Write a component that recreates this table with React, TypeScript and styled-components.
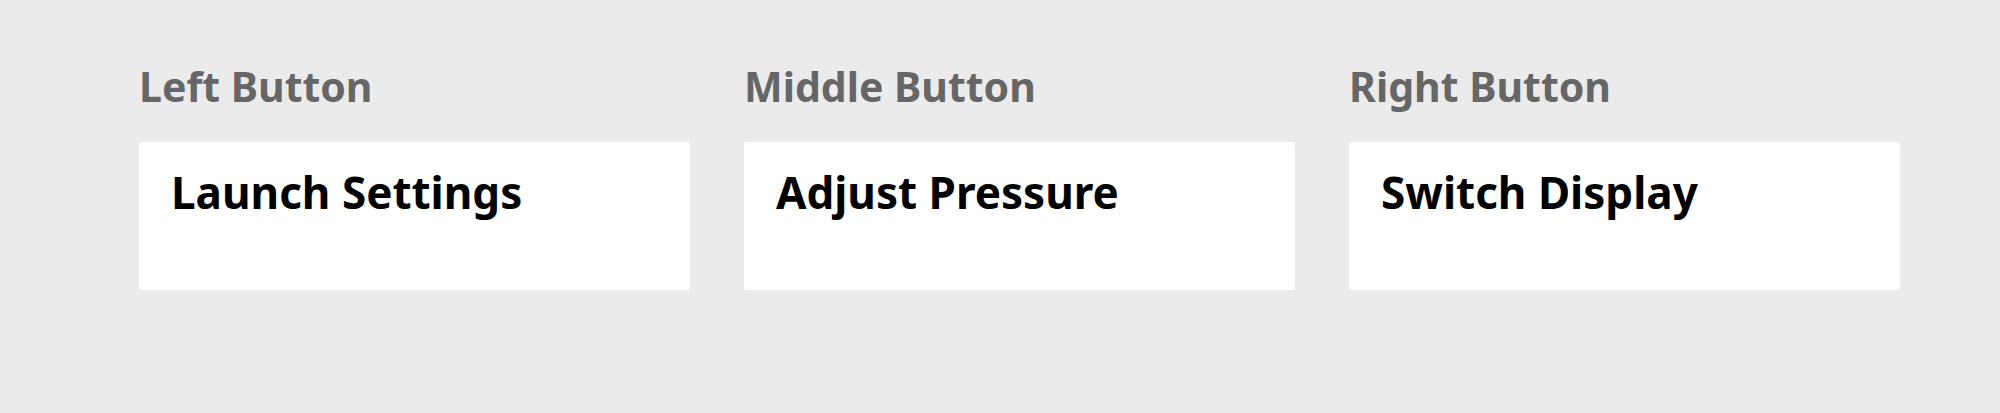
import React from 'react';
import styled, {createGlobalStyle} from "styled-components";

const GlobalStyle = createGlobalStyle`
  html, body {
    margin: 0;
    padding: 0;
    background: #ebebeb;
    font-family: "Noto Sans", "Open Sans", sans-serif;
  }
`

const buttons = [
    {label: 'Left Button', text: 'Launch Settings'},
    {label: 'Middle Button', text: 'Adjust Pressure'},
    {label: 'Right Button', text: 'Switch Display'},
]

export default function App() {
    return (
        <>
            <GlobalStyle/>
            <Page>
                {buttons.map(b => (
                    <Column key={b.label}>
                        <Label>{b.label}</Label>
                        <Card>{b.text}</Card>
                    </Column>
                ))}
            </Page>
        </>
    );
}

const Page = styled.div`
  display: grid;
  grid-template-columns: repeat(3, 551px);
  column-gap: 54px;
  padding: 58px 0 0 139px;
  min-height: 413px;
  box-sizing: border-box;
`

const Column = styled.div`
  display: flex;
  flex-direction: column;
`

const Label = styled.div`
  font-size: 41px;
  font-weight: 700;
  color: #666666;
  line-height: 56px;
  margin-bottom: 28px;
`

const Card = styled.div`
  background: #ffffff;
  border-radius: 3px;
  height: 148px;
  box-sizing: border-box;
  padding: 20px 32px;
  font-size: 44px;
  font-weight: 700;
  line-height: 60px;
  color: #000000;
`
